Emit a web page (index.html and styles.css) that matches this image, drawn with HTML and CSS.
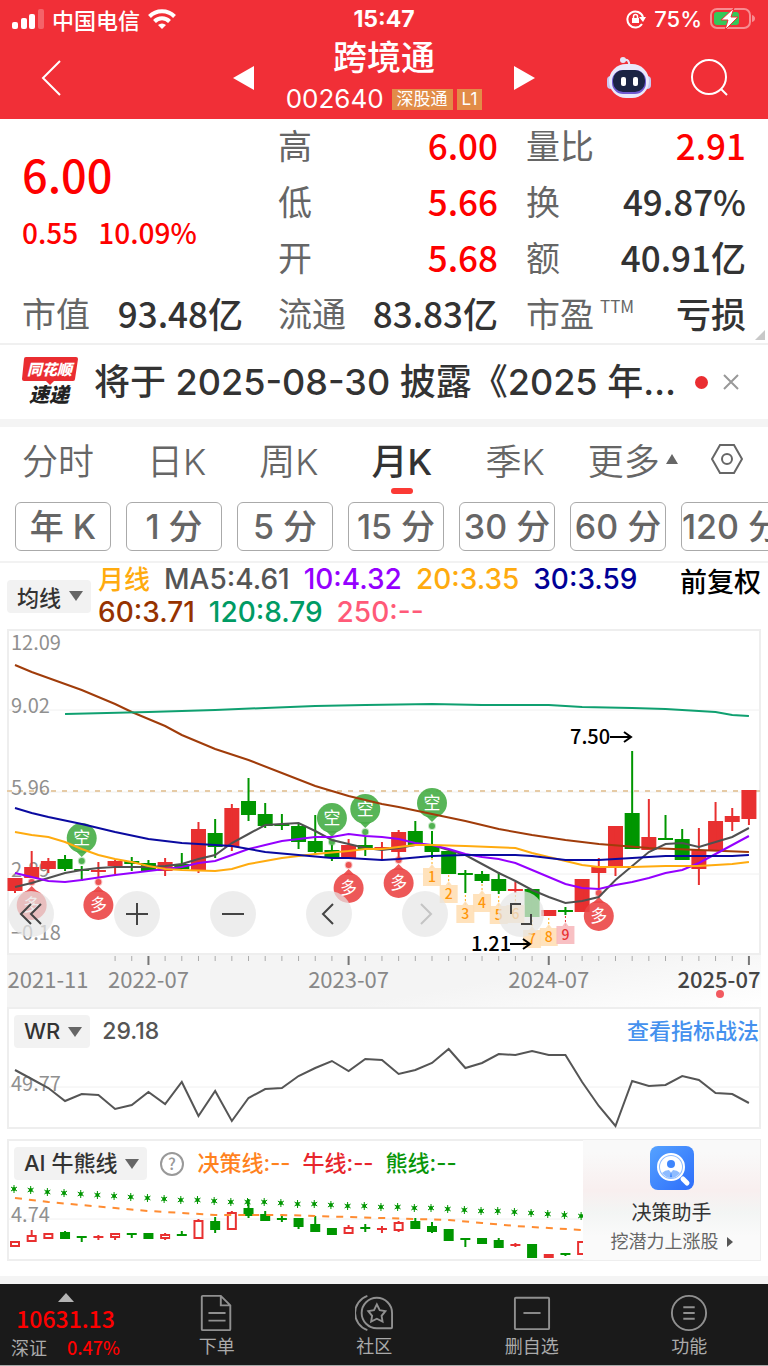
FILE: index.html
```html
<!DOCTYPE html>
<html lang="zh-CN">
<head>
    <meta charset="UTF-8">
    <meta name="viewport" content="width=device-width, initial-scale=1.0">
    <title>跨境通 002640</title>
    <link rel="stylesheet" href="styles.css">
</head>
<body>
    <header class="header">
        <div class="status-bar">
            <div class="status-left">
                <svg width="32" height="20" viewBox="0 0 32 20" fill="#fff">
                    <rect x="0" y="13" width="6" height="7" rx="2"/>
                    <rect x="9" y="9" width="6" height="11" rx="2"/>
                    <rect x="17" y="5" width="6" height="15" rx="2"/>
                    <rect x="26" y="0" width="6" height="20" rx="2" opacity="0.25"/>
                </svg>
                <span>中国电信</span>
                <svg width="28" height="20" viewBox="0 0 28 20" fill="none" stroke="#fff" stroke-width="4">
                    <path d="M1.500 7.500a17.500 17.500 0 0 1 25 0"/>
                    <path d="M6.500 12.500a10.500 10.500 0 0 1 15 0"/>
                    <path d="M14 20l-4-4a6 6 0 0 1 8 0z" fill="#fff" stroke="none"/>
                </svg>
            </div>
            <div class="status-time">15:47</div>
            <div class="status-right">
                <svg width="20" height="20" viewBox="0 0 20 20" fill="none" stroke="#fff" stroke-width="2">
                    <path d="M16 15A8 8 0 1 1 17 8"/>
                    <path d="M13 8h7l-3 5z" fill="#fff" stroke="none"/>
                    <rect x="6" y="9" width="7" height="5" fill="#fff" stroke="none"/>
                    <path d="M7.500 9V7.500a2 2 0 0 1 4 0V9" stroke-width="1.500"/>
                </svg>
                <span>75%</span>
                <svg width="46" height="22" viewBox="0 0 46 22">
                    <rect x="1" y="1" width="39" height="19" rx="6" fill="none" stroke="#fff" stroke-opacity="0.45" stroke-width="2"/>
                    <rect x="4" y="4" width="25" height="13" rx="3" fill="#35c759"/>
                    <path d="M42 7v7q3-1 3-3.500t-3-3.500z" fill="#fff" fill-opacity="0.45"/>
                    <path d="M24 0L11 12h7l-3 10 13-13h-7z" fill="#fff" stroke="#f12f37"/>
                </svg>
            </div>
        </div>
        <div class="title-bar">
            <button class="icon-button back" aria-label="返回">
                <svg width="22" height="38" viewBox="0 0 22 38" fill="none" stroke="#fff" stroke-width="2"><path d="M20 2L3 19l17 17"/></svg>
            </button>
            <button class="icon-button" aria-label="上一只">
                <svg width="22" height="24" viewBox="0 0 22 24" fill="#fff"><path d="M21 0v24L0 12z"/></svg>
            </button>
            <div class="stock">
                <h1>跨境通</h1>
                <div class="stock-code">
                    <span>002640</span>
                    <span class="tag">深股通</span>
                    <span class="tag">L1</span>
                </div>
            </div>
            <button class="icon-button" aria-label="下一只">
                <svg width="22" height="24" viewBox="0 0 22 24" fill="#fff"><path d="M1 0v24l21-12z"/></svg>
            </button>
            <div class="title-actions">
                <button class="icon-button" aria-label="智能助手">
                    <svg width="46" height="42" viewBox="0 0 46 42">
                        <path d="M18 3q6-1 5 6" fill="none" stroke="#e4e4f8" stroke-width="2"/>
                        <circle cx="17" cy="3" r="3" fill="#e4e4f8"/>
                        <rect x="1" y="19" width="8" height="13" rx="4" fill="#c9c8f2"/>
                        <rect x="37" y="19" width="8" height="13" rx="4" fill="#c9c8f2"/>
                        <rect x="3" y="7" width="40" height="34" rx="17" fill="#e9e9fb"/>
                        <rect x="6" y="13" width="34" height="24" rx="11" fill="#6e5ad0"/>
                        <rect x="7" y="13" width="32" height="22" rx="10" fill="#1b2444"/>
                        <rect x="15" y="20" width="5" height="9" rx="2" fill="#fff"/>
                        <rect x="27" y="20" width="5" height="9" rx="2" fill="#fff"/>
                    </svg>
                </button>
                <button class="icon-button" aria-label="搜索">
                    <svg width="38" height="38" viewBox="0 0 38 38" fill="none" stroke="#fff" stroke-width="2"><circle cx="19" cy="18" r="17"/><path d="M31 30l6 6"/></svg>
                </button>
            </div>
        </div>
    </header>

    <main>
        <section class="quote">
            <div class="quote-col">
                <div class="price-block">
                    <div class="price">6.00</div>
                    <div class="change"><span>0.55</span><span>10.09%</span></div>
                </div>
                <div class="quote-row"><span class="label">市值</span><span class="value">93.48亿</span></div>
            </div>
            <div class="quote-col">
                <div class="quote-row"><span class="label">高</span><span class="value up">6.00</span></div>
                <div class="quote-row"><span class="label">低</span><span class="value up">5.66</span></div>
                <div class="quote-row"><span class="label">开</span><span class="value up">5.68</span></div>
                <div class="quote-row"><span class="label">流通</span><span class="value">83.83亿</span></div>
            </div>
            <div class="quote-col">
                <div class="quote-row"><span class="label">量比</span><span class="value up">2.91</span></div>
                <div class="quote-row"><span class="label">换</span><span class="value">49.87%</span></div>
                <div class="quote-row"><span class="label">额</span><span class="value">40.91亿</span></div>
                <div class="quote-row"><span class="label">市盈<sup>TTM</sup></span><span class="value">亏损</span></div>
            </div>
            <svg class="corner" width="10" height="10" viewBox="0 0 10 10"><path d="M10 0v10H0z" fill="#c8c8c8"/></svg>
        </section>

        <section class="news">
            <svg class="news-logo" width="56" height="54" viewBox="0 0 56 54">
                <path d="M4 2h50q2 0 2 2l-3 20q0 2-2 2H32l-4 4-4-4H2q-2 0-2-2L2 4q0-2 2-2z" fill="#ea2d31"/>
                <text x="5" y="20" class="logo-top">同花顺</text>
                <text x="7" y="47" class="logo-bottom">速递</text>
            </svg>
            <a class="news-text" href="#">将于 2025-08-30 披露《2025 年…</a>
            <span class="news-dot"></span>
            <button class="icon-button" aria-label="关闭">
                <svg width="16" height="16" viewBox="0 0 16 16" stroke="#999" stroke-width="2"><path d="M1 1l14 14M15 1L1 15"/></svg>
            </button>
        </section>

        <nav class="tabs">
            <button class="tab">分时</button>
            <button class="tab">日K</button>
            <button class="tab">周K</button>
            <button class="tab active">月K</button>
            <button class="tab">季K</button>
            <button class="tab tab-more">更多<svg width="12" height="12" viewBox="0 0 12 12" fill="#666"><path d="M6 1l6 10H0z"/></svg></button>
            <button class="icon-button settings" aria-label="设置">
                <svg width="32" height="30" viewBox="0 0 32 30" fill="none" stroke="#666" stroke-width="2"><path d="M9 1h14l8 14-8 14H9L1 15z"/><circle cx="16" cy="15" r="5"/></svg>
            </button>
        </nav>

        <div class="periods">
            <button>年 K</button>
            <button>1 分</button>
            <button>5 分</button>
            <button>15 分</button>
            <button>30 分</button>
            <button>60 分</button>
            <button>120 分</button>
        </div>

        <div class="legend">
            <button class="picker">均线<i class="caret"></i></button>
            <div class="legend-values">
                <span class="ma20 cycle">月线</span>
                <span class="ma5">MA5:4.61</span>
                <span class="ma10">10:4.32</span>
                <span class="ma20">20:3.35</span>
                <span class="ma30">30:3.59</span>
                <span class="ma60">60:3.71</span>
                <span class="ma120">120:8.79</span>
                <span class="ma250">250:--</span>
            </div>
            <button class="adjust">前复权</button>
        </div>

        <div class="charts">
            <section class="kline">
                <svg id="kline" viewBox="0 0 754 326"></svg>
                <div class="chart-tools">
                    <button aria-label="最早"><svg width="24" height="24" viewBox="0 0 24 24"><path d="M12 2L2 12l10 10M22 2L12 12l10 10"/></svg></button>
                    <button aria-label="放大"><svg width="24" height="24" viewBox="0 0 24 24"><path d="M12 1v22M1 12h22"/></svg></button>
                    <button aria-label="缩小"><svg width="24" height="24" viewBox="0 0 24 24"><path d="M1 12h22"/></svg></button>
                    <button aria-label="左移"><svg width="24" height="24" viewBox="0 0 24 24"><path d="M16 2L6 12l10 10"/></svg></button>
                    <button aria-label="右移" class="disabled"><svg width="24" height="24" viewBox="0 0 24 24"><path d="M8 2l10 10L8 22"/></svg></button>
                    <button aria-label="全屏"><svg width="24" height="24" viewBox="0 0 24 24"><path d="M2 12V2h10M22 12v10H12"/></svg></button>
                </div>
            </section>
            <svg id="axis" class="axis" viewBox="0 0 754 52"></svg>

            <section class="panel">
                <svg id="wr" viewBox="0 0 754 122"></svg>
                <div class="panel-head">
                    <button class="picker">WR<i class="caret"></i></button>
                    <span class="wr-value">29.18</span>
                    <a class="guide" href="#">查看指标战法</a>
                </div>
            </section>

            <section class="panel">
                <svg id="bull" viewBox="0 0 754 122"></svg>
                <div class="panel-head">
                    <button class="picker">AI 牛熊线<i class="caret"></i></button>
                    <svg class="help" width="26" height="26" viewBox="0 0 26 26"><circle cx="13" cy="13" r="11" fill="none" stroke="#999" stroke-width="2"/><text x="13" y="19">?</text></svg>
                    <span class="decision">决策线:--</span>
                    <span class="bull">牛线:--</span>
                    <span class="bear">熊线:--</span>
                </div>
                <a class="promo" href="#">
                    <svg width="44" height="44" viewBox="0 0 44 44">
                        <defs><linearGradient id="promo-bg" x1="0" y1="0" x2="1" y2="1"><stop offset="0" stop-color="#55a2ff"/><stop offset="1" stop-color="#2d6dfb"/></linearGradient></defs>
                        <rect width="44" height="44" rx="8" fill="url(#promo-bg)"/>
                        <circle cx="21" cy="21" r="13" fill="#8fbcff" stroke="#fff" stroke-width="2"/>
                        <circle cx="21" cy="21" r="11" fill="#fff"/>
                        <circle cx="21" cy="18" r="4" fill="#3f86fc"/>
                        <path d="M12 27q3-3 7-3l2 3 2-3q4 0 7 3-4 5-9 5t-9-5z" fill="#8fbcff"/>
                        <path d="M21 25l1 6h-2z" fill="#3f86fc"/>
                        <path d="M33 33l4 4" stroke="#fff" stroke-width="5" stroke-linecap="round"/>
                    </svg>
                    <strong>决策助手</strong>
                    <span>挖潜力上涨股<i></i></span>
                </a>
            </section>
        </div>
    </main>

    <footer class="bottom-bar">
        <a class="index" href="#">
            <svg width="16" height="9" viewBox="0 0 16 9" fill="#b4b4b4"><path d="M8 0l8 9H0z"/></svg>
            <span class="index-value">10631.13</span>
            <span class="index-row"><span>深证</span><b>0.47%</b></span>
        </a>
        <a class="action" href="#">
            <svg width="38" height="38" viewBox="0 0 40 40"><path d="M5 2h19l10 10v25q0 1-1 1H5q-1 0-1-1V3q0-1 1-1zM24 2v10h10M11 20h18M11 28h18"/></svg>
            下单
        </a>
        <a class="action" href="#">
            <svg width="38" height="38" viewBox="0 0 40 40"><path d="M23 4a16 16 0 1 0 0 32h15q1 0 1-1V20A16 16 0 0 0 23 4zM13 2a19 19 0 0 0 0 36"/><path d="M23 11l3 6 6 1-4 5 1 6-6-3-6 3 1-6-4-5 6-1z"/></svg>
            社区
        </a>
        <a class="action" href="#">
            <svg width="38" height="38" viewBox="0 0 40 40"><rect x="2" y="4" width="36" height="33" rx="1"/><path d="M11 20h18"/></svg>
            删自选
        </a>
        <a class="action" href="#">
            <svg width="38" height="38" viewBox="0 0 40 40"><circle cx="20" cy="20" r="18"/><path d="M14 14h12M14 20h12M14 26h12"/></svg>
            功能
        </a>
    </footer>

    <script src="script.js"></script>
</body>
</html>
```
FILE: styles.css
```css
* {
    box-sizing: border-box;
}

body {
    margin: 0;
    font-family: Inter, "Noto Sans CJK SC", sans-serif;
    color: #333;
    background: #fff;
}

button {
    margin: 0;
    padding: 0;
    border: none;
    background: none;
    font: inherit;
    color: inherit;
    white-space: nowrap;
}

a {
    color: inherit;
    text-decoration: none;
}

svg {
    display: block;
    flex-shrink: 0;
}

.up {
    color: #fe0000;
}

/* header */
.header {
    background: #f12f37;
    color: #fff;
    height: 119px;
}

.status-bar {
    display: grid;
    grid-template-columns: 1fr auto 1fr;
    align-items: center;
    height: 38px;
    padding: 0 12px;
    font-size: 22px;
    font-weight: 500;
}

.status-left,
.status-right {
    display: flex;
    align-items: center;
    gap: 8px;
}

.status-right {
    justify-content: flex-end;
}

.status-time {
    font-weight: 700;
    font-size: 23px;
}

.title-bar {
    display: grid;
    grid-template-columns: 1fr 22px 258px 22px 1fr;
    align-items: center;
    height: 78px;
    padding: 0 40px;
}

.icon-button {
    display: flex;
    align-items: center;
    justify-content: center;
}

.back {
    justify-self: start;
}

.title-actions {
    display: flex;
    align-items: center;
    justify-content: flex-end;
    gap: 38px;
}

.stock {
    text-align: center;
}

.stock h1 {
    margin: 0;
    font-size: 34px;
    font-weight: 500;
    line-height: 40px;
}

.stock-code {
    display: flex;
    align-items: center;
    justify-content: center;
    gap: 4px;
    padding-top: 2px;
    font-size: 26px;
    line-height: 38px;
}

.stock-code span:first-child {
    margin-right: 4px;
}

.tag {
    padding: 0 5px;
    background: #e28c48;
    font-size: 17px;
    line-height: 21px;
}

/* quote */
.quote {
    position: relative;
    display: grid;
    grid-template-columns: 228fr 220fr 220fr;
    column-gap: 28px;
    padding: 0 22px;
    border-bottom: 2px solid #f0f0f0;
    font-family: "Noto Sans CJK SC", sans-serif;
}

.quote-col:first-child {
    padding-right: 7px;
}

.quote-row {
    display: flex;
    align-items: center;
    justify-content: space-between;
    height: 56px;
    padding-bottom: 6px;
    white-space: nowrap;
}

.price-block {
    height: 168px;
    padding-top: 23px;
    color: #fe0000;
}

.price {
    font-size: 45px;
    line-height: 64px;
    font-weight: 500;
}

.change {
    display: flex;
    gap: 20px;
    font-size: 28px;
    line-height: 52px;
    font-weight: 500;
}

.label {
    font-size: 34px;
    color: #666;
}

.label sup {
    margin-left: 6px;
    font-size: 17px;
    line-height: 17px;
    vertical-align: 14px;
}

.value {
    font-size: 35px;
    font-weight: 500;
}

.corner {
    position: absolute;
    right: 3px;
    bottom: 3px;
}

/* news */
.news {
    display: flex;
    align-items: center;
    height: 82px;
    padding: 0 29px 0 22px;
    border-bottom: 8px solid #f4f4f4;
}

.logo-top,
.logo-bottom {
    font-family: "Noto Sans CJK SC", sans-serif;
    font-style: italic;
    font-weight: 900;
    font-size: 15px;
    fill: #fff;
}

.logo-bottom {
    font-size: 20px;
    fill: #222;
}

.news-text {
    flex: 1;
    margin-left: 16px;
    white-space: nowrap;
    font-size: 36px;
    font-weight: 500;
    line-height: 50px;
}

.news-dot {
    width: 13px;
    height: 13px;
    margin-right: 15px;
    border-radius: 50%;
    background: #ea2d31;
}

/* tabs */
.tabs {
    display: flex;
    align-items: center;
    gap: 53px;
    height: 70px;
    padding: 0 22px;
    font-size: 36px;
    font-weight: 350;
    color: #666;
}

.tab {
    position: relative;
    height: 70px;
    padding-bottom: 6px;
}

.tab.active {
    font-weight: 500;
    color: #333;
}

.tab.active::after {
    content: "";
    position: absolute;
    left: 50%;
    bottom: 3px;
    width: 22px;
    height: 6px;
    margin-left: -11px;
    border-radius: 3px;
    background: #fb3a35;
}

.tab-more {
    display: flex;
    align-items: center;
    gap: 6px;
    margin-left: -10px;
}

.settings {
    height: 70px;
    margin-left: -20px;
    padding-bottom: 6px;
}

.periods {
    display: flex;
    gap: 15px;
    padding: 5px 0 10px 15px;
    border-bottom: 2px solid #f2f2f2;
    overflow: hidden;
}

.periods button {
    flex: 0 0 96px;
    height: 49px;
    border: 1px solid #aaa;
    border-radius: 6px;
    font-size: 34px;
    font-weight: 500;
    line-height: 46px;
    color: #666;
}

/* moving average legend */
.legend {
    display: flex;
    align-items: center;
    height: 66px;
    padding: 0 7px;
}

.picker {
    display: flex;
    align-items: center;
    gap: 8px;
    height: 33px;
    padding: 0 8px 0 10px;
    border-radius: 4px;
    background: #f2f2f2;
    font-size: 22px;
    font-weight: 500;
}

.caret {
    border: 7px solid transparent;
    border-top: 10px solid #666;
    border-bottom: none;
}

.legend-values {
    flex: 1;
    display: flex;
    flex-wrap: wrap;
    column-gap: 14px;
    margin-left: 7px;
    font-size: 28px;
    font-weight: 500;
    line-height: 33px;
}

.cycle {
    font-size: 26px;
}

.ma5 { color: #555; }
.ma10 { color: #9500ff; }
.ma20 { color: #ffab0f; }
.ma30 { color: #000096; }
.ma60 { color: #963200; }
.ma120 { color: #009b64; }
.ma250 { color: #ff5a78; }

.adjust {
    align-self: flex-start;
    font-size: 27px;
    font-weight: 500;
    line-height: 40px;
    color: #000;
}

/* charts */
.charts {
    padding: 0 7px 15px;
    border-bottom: 8px solid #f4f4f4;
}

.charts > section > svg,
.axis {
    width: 100%;
    height: auto;
}

.charts text {
    font-family: "Noto Sans CJK SC", sans-serif;
}

.kline {
    position: relative;
}

.frame {
    fill: none;
    stroke: #eee;
    stroke-width: 2;
}

.grid-line {
    stroke: #f0f0f0;
    stroke-width: 1;
}

.scale {
    font-size: 20px;
    fill: #909090;
}

.peak {
    font-size: 20px;
    font-weight: 500;
}

.arrow {
    fill: none;
    stroke: #000;
    stroke-width: 2;
}

.bubble {
    font-size: 17px;
    fill: #fff;
    text-anchor: middle;
}

.count {
    font-size: 14px;
    font-weight: 500;
    text-anchor: middle;
}

.chart-tools {
    position: absolute;
    left: 1px;
    bottom: 18px;
    display: flex;
    gap: 50px;
}

.chart-tools button {
    display: flex;
    align-items: center;
    justify-content: center;
    width: 46px;
    height: 46px;
    border-radius: 50%;
    background: rgba(230, 230, 230, 0.72);
}

.chart-tools button:first-child {
    margin-right: 10px;
}

.chart-tools svg {
    fill: none;
    stroke: #444;
    stroke-width: 2;
}

.chart-tools .disabled svg {
    stroke: #c4c4c4;
}

.axis {
    background: linear-gradient(170deg, #f4f4f4 60%, #fff);
}

.axis-label {
    font-size: 22px;
    fill: #888;
    text-anchor: middle;
}

.axis-label.current {
    font-weight: 500;
    fill: #444;
}

.panel {
    display: grid;
    margin-bottom: 10px;
}

.panel:last-child {
    margin-bottom: 0;
}

.panel > * {
    grid-area: 1 / 1;
}

.panel-head {
    display: flex;
    align-items: center;
    align-self: start;
    gap: 12px;
    padding: 8px 2px 0 7px;
    font-size: 22px;
    font-weight: 500;
    line-height: 33px;
    white-space: nowrap;
}

.wr-value {
    font-size: 23px;
    color: #555;
}

.guide {
    margin-left: auto;
    color: #4591ee;
}

.help text {
    font-size: 16px;
    fill: #999;
    text-anchor: middle;
}

.decision { color: #ff821e; }
.bull { color: #e8262d; }
.bear { color: #0a960a; }

.promo {
    display: flex;
    flex-direction: column;
    align-items: center;
    justify-self: end;
    width: 178px;
    padding-top: 6px;
    border: 1px solid #eee;
    border-left: none;
    background: linear-gradient(#f9f9f9 10%, #f8efef 42%, #f3f5f4 60%, #fafafa 80%);
    z-index: 1;
}

.promo strong {
    font-size: 20px;
    font-weight: 400;
    line-height: 46px;
}

.promo span {
    display: flex;
    align-items: center;
    gap: 8px;
    font-size: 18px;
    line-height: 12px;
    color: #666;
}

.promo i {
    border: 5px solid transparent;
    border-left: 6px solid #555;
    border-right: none;
}

/* bottom bar */
.bottom-bar {
    display: grid;
    grid-template-columns: 138px 1fr 1fr 1fr 1fr;
    height: 82px;
    background: #1a1a1a;
    border-bottom: 1px solid #aaa;
    color: #aaa;
    font-size: 18px;
    font-family: "Noto Sans CJK SC", sans-serif;
}

.index {
    display: flex;
    flex-direction: column;
    align-items: center;
    width: 131px;
    padding-top: 9px;
}

.index-value {
    color: #fe0000;
    font-size: 23px;
    font-weight: 500;
    line-height: 32px;
}

.index-row {
    display: flex;
    gap: 20px;
    line-height: 26px;
}

.index-row b {
    color: #fe0000;
    font-weight: 500;
}

.action {
    display: flex;
    flex-direction: column;
    align-items: center;
    padding-top: 10px;
    line-height: 26px;
}

.action svg {
    fill: none;
    stroke: #909090;
    stroke-width: 2;
}
```
FILE: script.js
```js
const RED = '#e83030';
const GREEN = '#009600';
const STEP = 16.68;

function xAt(i) {
    return 8 + i * STEP;
}

// [color, high, body top, body bottom, low]
const candles = [
    ['r', 249, 249, 262, 264], ['r', 222, 238, 249, 249], ['r', 229, 232, 240, 244], ['g', 226, 230, 240, 242],
    ['g', 237, 240, 242, 252], ['r', 233, 241, 243, 248], ['r', 231, 232, 237, 245], ['g', 228, 232, 235, 242],
    ['g', 231, 234, 242, 242], ['r', 229, 233, 242, 247], ['g', 224, 235, 240, 240], ['r', 193, 200, 241, 244],
    ['g', 190, 204, 218, 229], ['r', 175, 179, 218, 222], ['g', 149, 172, 186, 192], ['g', 174, 185, 197, 199],
    ['g', 185, 195, 197, 201], ['g', 195, 197, 213, 220], ['g', 186, 212, 223, 226], ['g', 216, 221, 229, 232],
    ['r', 210, 216, 230, 230], ['g', 208, 216, 220, 227], ['r', 213, 218, 220, 231], ['r', 201, 203, 223, 231],
    ['g', 192, 202, 216, 216], ['g', 202, 216, 223, 229], ['g', 222, 222, 245, 245], ['g', 241, 244, 246, 264],
    ['g', 242, 245, 252, 254], ['g', 243, 250, 262, 265], ['r', 253, 260, 262, 264], ['g', 260, 260, 288, 288],
    ['r', 281, 281, 287, 287], ['g', 278, 281, 283, 286], ['r', 250, 250, 283, 283], ['r', 229, 238, 244, 261],
    ['r', 197, 197, 239, 247], ['g', 122, 184, 220, 220], ['r', 170, 208, 221, 221], ['g', 186, 209, 211, 211],
    ['g', 200, 210, 231, 231], ['r', 199, 221, 240, 256], ['r', 173, 192, 221, 221], ['r', 179, 187, 193, 202],
    ['r', 161, 161, 190, 196]
];

// moving averages as [candle index, y]
const averages = {
    '#a03c0a': [[0, 36], [1, 43], [2, 49], [3, 55], [4, 61], [5, 68], [6, 75], [7, 83], [8, 90], [9, 97], [10, 106], [12, 120], [14, 131], [16, 144], [18, 157], [20, 167], [22, 175], [23, 178], [25, 185], [27, 192], [29, 200], [31, 206], [33, 211], [35, 215], [38, 219], [41, 221], [44, 223]],
    '#0fa070': [[3, 85], [8, 83], [10, 82], [12, 81], [15, 79], [18, 77], [21, 76], [25, 75], [28, 76], [32, 76], [34, 78], [37, 79], [39, 80], [42, 83], [43, 86], [44, 87]],
    '#505050': [[0, 258], [1, 254], [2, 249], [3, 244], [4, 241], [5, 239], [6, 238], [8, 238], [9, 237], [10, 235], [11, 230], [12, 226], [13, 214], [14, 205], [15, 196], [17, 194], [18, 202], [19, 211], [20, 215], [21, 219], [22, 221], [23, 219], [24, 216], [25, 216], [26, 221], [27, 226], [28, 235], [29, 244], [30, 252], [31, 261], [32, 268], [33, 274], [34, 272], [35, 268], [36, 251], [37, 237], [38, 223], [39, 215], [40, 214], [41, 218], [42, 213], [43, 208], [44, 199]],
    '#9500ff': [[0, 244], [1, 248], [2, 252], [3, 253], [4, 251], [6, 246], [8, 242], [10, 238], [11, 234], [12, 232], [13, 226], [14, 220], [15, 216], [16, 212], [17, 210], [18, 208], [19, 208], [20, 205], [21, 207], [22, 208], [23, 210], [24, 214], [25, 216], [26, 220], [27, 225], [28, 228], [29, 230], [30, 234], [31, 241], [32, 248], [33, 255], [34, 259], [35, 260], [36, 256], [37, 253], [38, 249], [39, 244], [40, 241], [41, 234], [42, 225], [43, 216], [44, 207]],
    '#ffab0f': [[0, 203], [1, 206], [2, 208], [3, 213], [4, 220], [5, 226], [6, 230], [7, 233], [8, 237], [9, 240], [10, 241], [12, 242], [13, 240], [14, 235], [15, 232], [16, 229], [18, 225], [20, 222], [21, 220], [22, 220], [23, 218], [24, 216], [25, 216], [27, 217], [30, 219], [31, 224], [32, 228], [33, 232], [34, 236], [35, 238], [37, 238], [39, 237], [41, 237], [43, 235], [44, 233]],
    '#0a0aa0': [[0, 179], [1, 184], [2, 188], [4, 195], [5, 199], [6, 203], [8, 210], [10, 214], [12, 216], [13, 217], [15, 223], [17, 226], [19, 229], [20, 229], [22, 231], [23, 230], [25, 227], [27, 226], [30, 226], [31, 227], [33, 231], [35, 231], [37, 229], [39, 227], [43, 227], [44, 226]]
};

// [candle index, circle y, dot y, text]
const bubbles = [
    [4, 209, 232, '空'], [19, 189, 213, '空'], [21, 180, 203, '空'], [25, 174, 197, '空'],
    [1, 276, 253, '多'], [5, 276, 253, '多'], [20, 259, 236, '多'], [23, 254, 231, '多'], [35, 287, 264, '多']
];

// [candle index, top]
const counts = [[25, 239], [26, 256], [27, 276], [28, 265], [29, 277], [30, 276], [31, 301], [32, 299], [33, 297]];

const wrValues = [63, 72, 81, 94, 87, 88, 102, 98, 85, 97, 75, 109, 84, 114, 91, 82, 81, 69, 61, 54, 64, 52, 53, 67, 63, 56, 42, 61, 56, 47, 48, 44, 48, 48, 75, 99, 119, 74, 79, 78, 69, 73, 86, 87, 96];

const bullCandles = [
    ['r', 103, 103, 107, 107], ['r', 91, 97, 102, 102], ['r', 94, 95, 99, 100], ['g', 92, 94, 99, 99], ['g', 97, 98, 99, 103],
    ['r', 96, 98, 99, 101], ['r', 95, 95, 98, 101], ['g', 94, 95, 96, 99], ['g', 94, 95, 99, 99], ['r', 94, 96, 99, 101],
    ['g', 92, 96, 97, 97], ['r', 80, 82, 99, 100], ['g', 78, 83, 90, 94], ['r', 72, 74, 90, 91], ['g', 60, 70, 76, 79],
    ['g', 72, 76, 81, 81], ['g', 77, 80, 81, 83], ['g', 80, 80, 87, 90], ['g', 77, 86, 92, 93], ['g', 89, 90, 95, 95],
    ['r', 86, 89, 94, 95], ['g', 85, 89, 90, 93], ['r', 87, 90, 91, 94], ['r', 82, 84, 91, 93], ['g', 79, 83, 89, 89],
    ['g', 83, 88, 92, 94], ['g', 91, 91, 101, 101], ['g', 99, 100, 101, 108], ['g', 99, 100, 104, 104], ['g', 99, 102, 108, 109],
    ['r', 104, 106, 107, 108], ['g', 106, 106, 118, 118], ['r', 115, 116, 118, 118], ['g', 114, 115, 116, 117], ['r', 102, 103, 115, 116]
];

const stars = [50, 51, 53, 54, 55, 56, 57, 58, 59, 60, 61, 61, 62, 63, 63, 63, 64, 65, 65, 66, 67, 67, 68, 68, 69, 69, 70, 71, 72, 72, 73, 74, 75, 76, 77];
const decision = [[0, 59], [2, 63], [4, 66], [6, 69], [8, 72], [10, 74], [12, 76], [16, 76], [20, 78], [24, 80], [26, 81], [28, 84], [30, 87], [32, 89], [35, 92]];

function polyline(points, color, extra = '') {
    const list = points.map(([i, y]) => `${xAt(i)},${y}`).join(' ');
    return `<polyline points="${list}" fill="none" stroke="${color}" stroke-width="2" ${extra}/>`;
}

function frame(height) {
    return `<rect class="frame" x="1" y="1" width="752" height="${height - 2}"/>`;
}

function gridLine(y) {
    return `<path class="grid-line" d="M1 ${y}H753"/>`;
}

function scale(y, text) {
    return `<text class="scale" x="4" y="${y}">${text}</text>`;
}

function drawKline() {
    let out = frame(326) + [81, 163, 245].map(gridLine).join('');
    out += '<path d="M0 162H753" stroke="#e6cba6" stroke-width="2" stroke-dasharray="5 6"/>';
    out += scale(21, '12.09') + scale(84, '9.02') + scale(166, '5.96') + scale(248, '2.89') + scale(311, '−0.18');

    candles.forEach(([c, high, top, bottom, low], i) => {
        const color = c === 'r' ? RED : GREEN;
        out += `<rect x="${xAt(i) - 7.5}" y="${top}" width="15" height="${bottom - top}" fill="${color}"/>`;
        out += `<path d="M${xAt(i)} ${high}V${low}" stroke="${color}" stroke-width="2"/>`;
    });

    counts.forEach(([i, y], n) => {
        const last = n === 8;
        const x = xAt(i);
        out += `<path d="M${x} ${y - 10}v10" stroke="${last ? RED : '#ffab0f'}" stroke-dasharray="2 2"/>`;
        out += `<path d="M${x - 9} ${y}h6l3-4 3 4h6v18h-18z" fill="${last ? '#f7b9bd' : '#ffdfb5'}" fill-opacity="0.9"/>`;
        out += `<text class="count" x="${x}" y="${y + 14}" fill="${last ? RED : '#ff960a'}">${n + 1}</text>`;
    });

    bubbles.forEach(([i, y, dot, text]) => {
        const x = xAt(i);
        const color = text === '空' ? '#46ad46' : '#eb4646';
        const dir = dot > y ? 1 : -1;
        out += `<g fill="${color}" fill-opacity="0.9"><circle cx="${x}" cy="${y}" r="15"/>`;
        out += `<path d="M${x - 6} ${y + 13 * dir}L${x} ${y + 19 * dir}L${x + 6} ${y + 13 * dir}z"/>`;
        out += `<circle cx="${x}" cy="${dot}" r="3"/><circle cx="${x}" cy="${dot}" r="4" fill-opacity="0.3"/></g>`;
        out += `<text class="bubble" x="${x}" y="${y + 6}">${text}</text>`;
    });

    for (const color in averages) {
        out += polyline(averages[color], color);
    }

    out += '<text class="peak" x="563" y="115">7.50</text><path class="arrow" d="M603 108h21M617 103l7 5-7 5"/>';
    out += '<text class="peak" x="464" y="322">1.21</text><path class="arrow" d="M503 315h20M516 310l7 5-7 5"/>';
    document.getElementById('kline').innerHTML = out;
}

function drawAxis() {
    let out = '';
    for (let i = 6; i < 45; i++) {
        const major = i % 12 === 8;
        out += `<path d="M${xAt(i)} 1v${major ? 9 : 5}" stroke="${major ? '#777' : '#aaa'}" stroke-width="${major ? 2 : 1}"/>`;
    }
    out += '<text class="axis-label" x="41" y="33">2021-11</text>';
    [[8, '2022-07'], [20, '2023-07'], [32, '2024-07']].forEach(([i, text]) => {
        out += `<text class="axis-label" x="${xAt(i)}" y="33">${text}</text>`;
    });
    out += '<text class="axis-label current" x="712" y="33">2025-07</text>';
    out += '<circle cx="713" cy="39" r="4" fill="#f25a60"/>';
    document.getElementById('axis').innerHTML = out;
}

function drawWr() {
    document.getElementById('wr').innerHTML = frame(122) + gridLine(80) + scale(84, '49.77') +
        polyline(wrValues.map((y, i) => [i, y]), '#555');
}

function drawBull() {
    let out = frame(122) + gridLine(80) + scale(83, '4.74');
    stars.forEach((y, i) => {
        const x = xAt(i) - 1;
        out += `<path d="M${x} ${y - 4}v8M${x - 3} ${y - 2}l6 4M${x + 3} ${y - 2}l-6 4" stroke="${GREEN}"/>`;
        out += `<circle cx="${x}" cy="${y}" r="2" fill="${GREEN}"/>`;
    });
    bullCandles.forEach(([c, high, top, bottom, low], i) => {
        const x = xAt(i);
        const color = c === 'r' ? RED : GREEN;
        out += `<path d="M${x} ${high}V${top}M${x} ${bottom}V${low}" stroke="${color}" stroke-width="2"/>`;
        if (bottom - top < 2) {
            out += `<path d="M${x - 5} ${top}h10" stroke="${color}" stroke-width="2"/>`;
        } else {
            out += `<rect x="${x - 4}" y="${top}" width="8" height="${bottom - top}" fill="${c === 'r' ? '#fff' : color}" stroke="${color}" stroke-width="2"/>`;
        }
    });
    out += polyline(decision, '#ff8c32', 'stroke-dasharray="7 7"');
    document.getElementById('bull').innerHTML = out;
}

drawKline();
drawAxis();
drawWr();
drawBull();
```
